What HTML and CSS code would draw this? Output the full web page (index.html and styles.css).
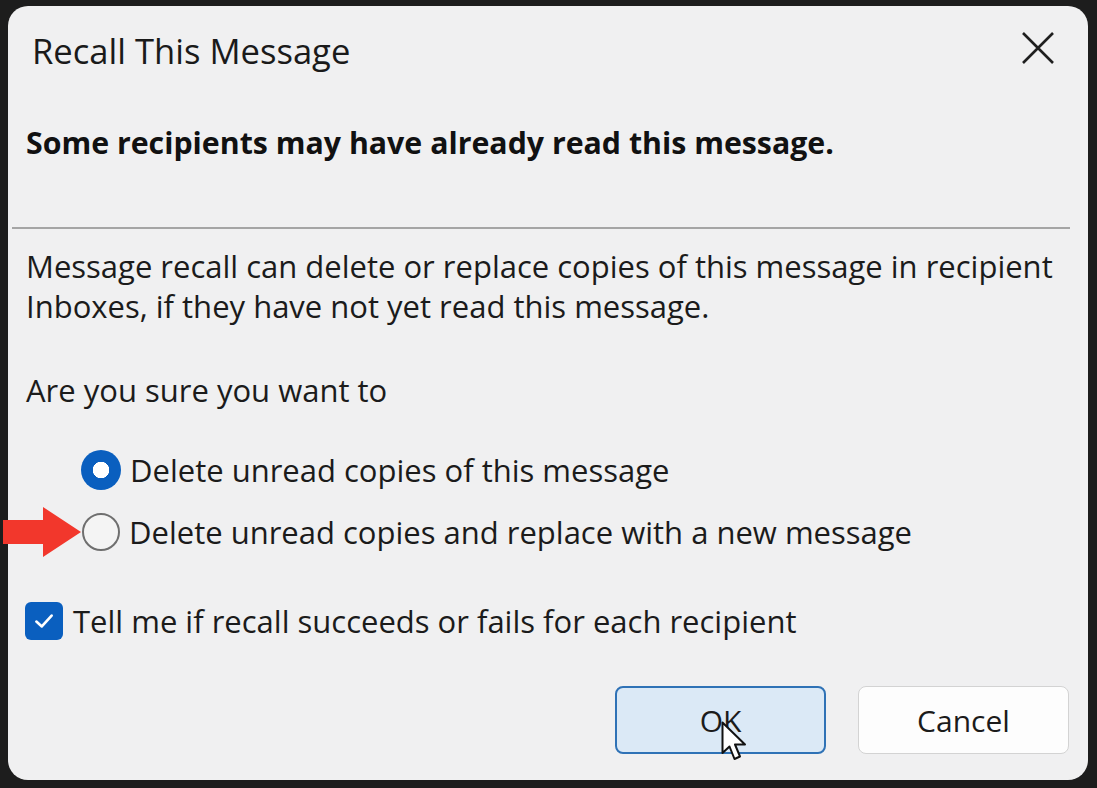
FILE: index.html
```html
<!DOCTYPE html>
<html lang="en">
<head>
<meta charset="utf-8">
<title>Recall This Message</title>
<link rel="stylesheet" href="styles.css">
</head>
<body>
<div class="dialog">
  <div class="titlebar">
    <div class="title">Recall This Message</div>
    <svg class="close" width="36" height="36" viewBox="0 0 36 36"><path d="M3 3 L33 33 M33 3 L3 33" stroke="#1f1f1f" stroke-width="2.6" fill="none"/></svg>
  </div>
  <div class="content">
    <div class="warning">Some recipients may have already read this message.</div>
    <div class="rule"></div>
    <p class="para">Message recall can delete or replace copies of this message in recipient<br>Inboxes, if they have not yet read this message.</p>
    <p class="question">Are you sure you want to</p>
    <div class="options">
      <label class="option">
        <span class="radio checked"></span>
        <span class="label">Delete unread copies of this message</span>
      </label>
      <label class="option">
        <span class="arrow-wrap">
          <svg class="arrow" width="78" height="50" viewBox="0 0 78 50"><path d="M0 13 L40 13 L40 0 L78 25 L40 50 L40 37 L0 37 Z" fill="#f2372c"/></svg>
        </span>
        <span class="radio"></span>
        <span class="label">Delete unread copies and replace with a new message</span>
      </label>
    </div>
    <label class="check-row">
      <span class="checkbox"><svg width="24" height="24" viewBox="0 0 22 22"><path d="M4 11.5 L9 16 L18 6" stroke="#fff" stroke-width="2.4" fill="none" stroke-linecap="round" stroke-linejoin="round"/></svg></span>
      <span class="label">Tell me if recall succeeds or fails for each recipient</span>
    </label>
    <div class="buttons">
      <div class="btn btn-primary">OK
        <svg class="cursor" width="28" height="42" viewBox="0 0 28 42"><path d="M1.5 1.5 L1.5 32 L8.5 25.5 L13.5 38 L19 35.5 L14 23.5 L24 23.5 Z" fill="#fff" stroke="#111" stroke-width="2" stroke-linejoin="round"/></svg>
      </div>
      <div class="btn">Cancel</div>
    </div>
  </div>
</div>
</body>
</html>
```
FILE: styles.css
```css
html, body {
  margin: 0;
  padding: 0;
}
body {
  width: 1097px;
  height: 788px;
  background: #1d1d1d;
  font-family: "Open Sans", "Noto Sans", "DejaVu Sans", sans-serif;
  color: #1b1b1b;
  overflow: hidden;
  padding-top: 6px;
  box-sizing: border-box;
}
.dialog {
  margin-left: 8px;
  width: 1080px;
  height: 774px;
  background: #f0f0f1;
  border-radius: 20px;
  box-sizing: border-box;
}
.titlebar {
  height: 92px;
  display: flex;
  align-items: center;
  justify-content: space-between;
  padding: 0 32px 0 24px;
}
.title {
  font-size: 34.6px;
  line-height: 44px;
  color: #1a1a1a;
  margin-top: -3px;
}
.close {
  margin-top: -8px;
}
.content {
  padding: 0 18px;
}
.warning {
  font-weight: 700;
  font-size: 30.3px;
  line-height: 40px;
  margin-top: 25px;
  color: #111;
  white-space: nowrap;
}
.rule {
  height: 2px;
  background: #a5a5a5;
  margin: 64px 0 0 -14px;
}
.para {
  margin: 17px 0 0;
  font-size: 31px;
  line-height: 40px;
  white-space: nowrap;
}
.question {
  margin: 44px 0 0;
  font-size: 31px;
  line-height: 40px;
}
.options {
  margin-top: 40px;
  padding-left: 56px;
  display: flex;
  flex-direction: column;
  gap: 22px;
}
.option {
  display: flex;
  align-items: center;
  height: 40px;
  position: relative;
}
.arrow-wrap {
  position: absolute;
  left: -79px;
  top: -5px;
}
.arrow {
  display: block;
}
.radio {
  width: 38px;
  height: 38px;
  border-radius: 50%;
  border: 2px solid #6f6f6f;
  box-sizing: border-box;
  background: #f4f4f4;
  flex: none;
}
.radio.checked {
  width: 40px;
  height: 40px;
  border: none;
  background: radial-gradient(circle, #fff 0 8px, #0a5fbf 8.5px);
  margin-left: -1px;
}
.label {
  font-size: 31px;
  line-height: 40px;
  margin-left: 9px;
  white-space: nowrap;
}
.check-row {
  display: flex;
  align-items: center;
  margin-top: 49px;
  margin-left: -1px;
  height: 40px;
}
.checkbox {
  width: 38px;
  height: 38px;
  border-radius: 6px;
  background: #0a5fbf;
  display: flex;
  align-items: center;
  justify-content: center;
  flex: none;
}
.check-row .label {
  margin-left: 10px;
}
.buttons {
  display: flex;
  justify-content: flex-end;
  gap: 32px;
  margin-top: 45px;
  padding-right: 1px;
}
.btn {
  width: 211px;
  height: 68px;
  box-sizing: border-box;
  border: 1.5px solid #d3d3d3;
  border-radius: 8px;
  background: #fdfdfd;
  font-size: 30px;
  display: flex;
  align-items: center;
  justify-content: center;
  position: relative;
}
.btn-primary {
  background: #dbe9f6;
  border: 2px solid #2f72b6;
}
.cursor {
  position: absolute;
  left: 104px;
  top: 33px;
}
```
